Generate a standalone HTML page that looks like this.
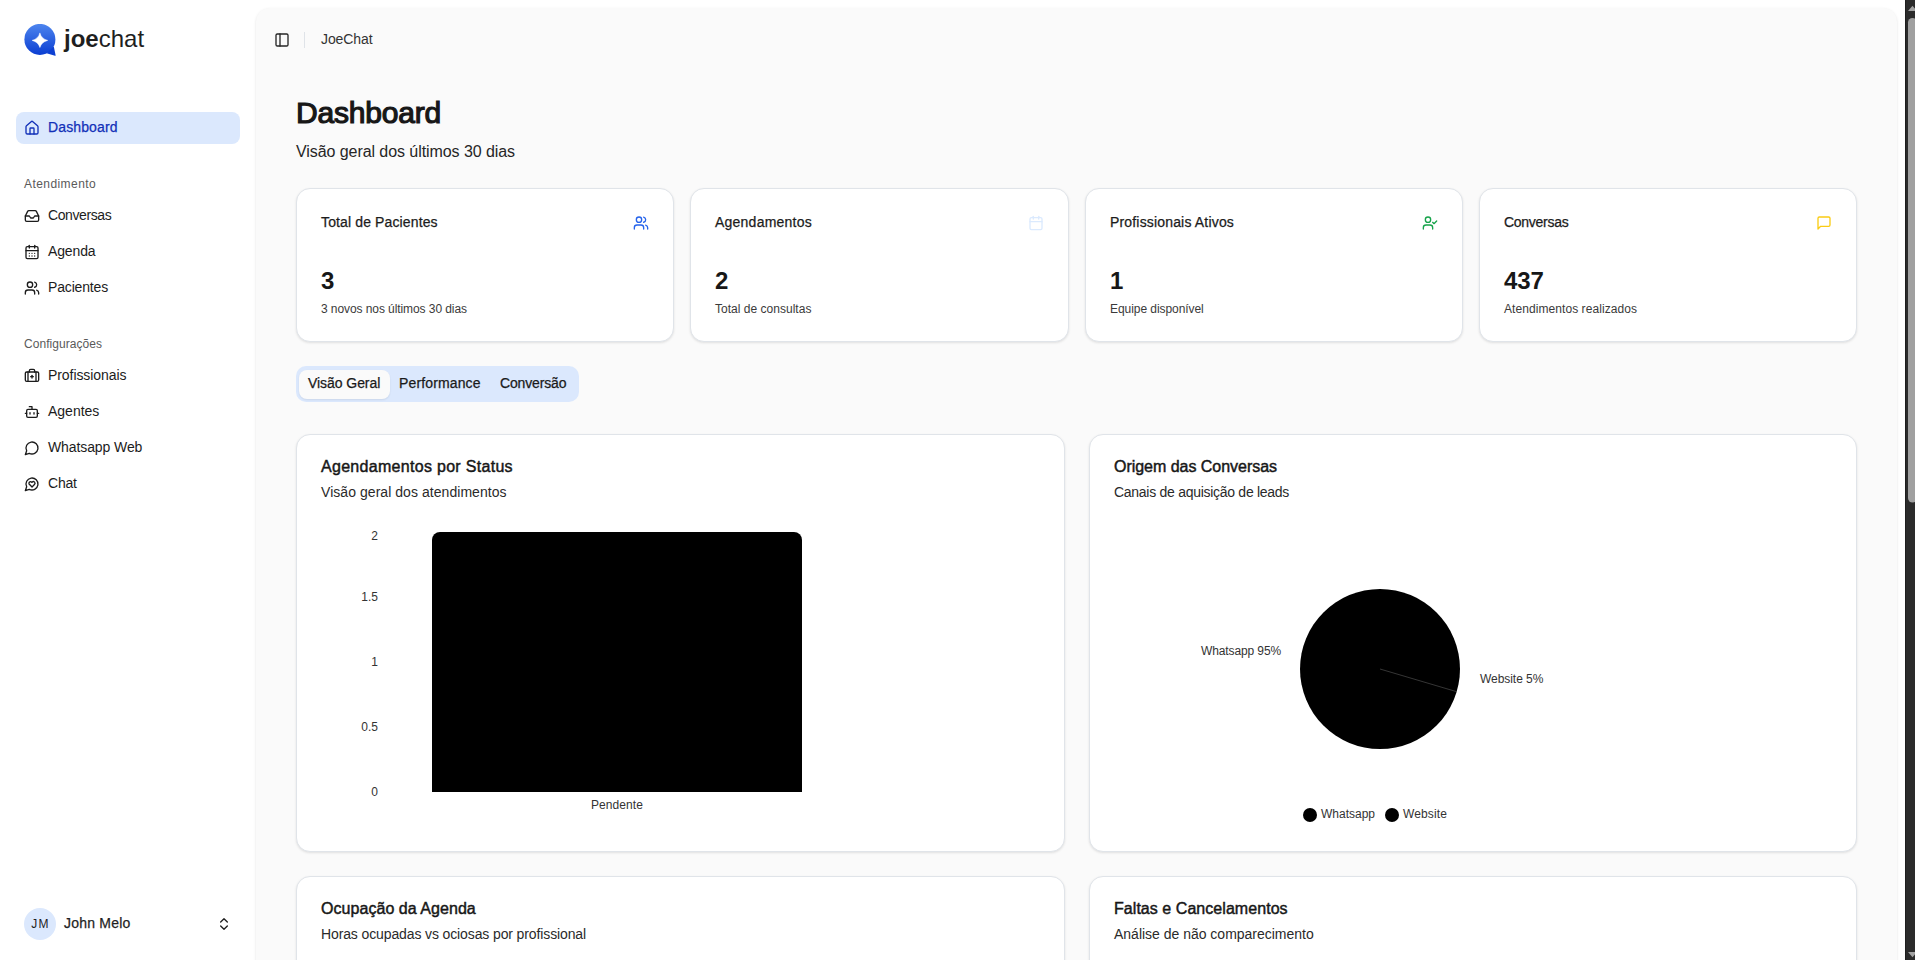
<!DOCTYPE html>
<html>
<head>
<meta charset="utf-8">
<title>JoeChat Dashboard</title>
<style>
*{box-sizing:border-box;margin:0;padding:0}
html,body{width:1915px;height:960px;overflow:hidden;background:#fff;font-family:"Liberation Sans",sans-serif;color:#171717}
.a{position:absolute;white-space:nowrap}
svg.i{position:absolute;fill:none;stroke:currentColor;stroke-width:2;stroke-linecap:round;stroke-linejoin:round}
#main{position:absolute;left:256px;top:8px;width:1641px;height:1000px;background:#fafafa;border-radius:14px;box-shadow:0 1px 3px 0 rgba(0,0,0,0.1),0 1px 2px -1px rgba(0,0,0,0.1)}
.card{position:absolute;background:#fff;border:1px solid #e0e4e9;border-radius:14px;box-shadow:0 1px 3px rgba(0,0,0,0.07),0 1px 2px rgba(0,0,0,0.04)}
</style>
</head>
<body>
<svg class="a" style="left:24px;top:24px;width:32px;height:32px" viewBox="0 0 32 32">
  <defs><linearGradient id="lg" x1="0" y1="0" x2="0" y2="1"><stop offset="0" stop-color="#4d85ee"/><stop offset="1" stop-color="#0b3ed2"/></linearGradient></defs>
  <circle cx="15.9" cy="15.4" r="15.5" fill="url(#lg)"/>
  <path d="M29.8 22.5 L31.6 31.2 Q31.8 31.9 31 31.7 L22.5 29.2 Z" fill="#0d40d3"/>
  <path d="M15.9 8.9 Q17.5 14.8 23.7 16.4 Q17.5 18 15.9 23.5 Q14.3 18 8.1 16.4 Q14.3 14.8 15.9 8.9 Z" fill="#fff" stroke="#fff" stroke-width="0.5" stroke-linejoin="round"/>
</svg>
<div class="a" style="left:64px;top:25px;font-size:24px;line-height:28px;color:#1f1f1f"><b>joe</b>chat</div>
<div class="a" style="left:16px;top:112px;width:224px;height:32px;background:#dbe8fd;border-radius:8px"></div>
<svg class="i" style="left:24px;top:120px;width:16px;height:16px;color:#1230b8" viewBox="0 0 24 24"><path d="M15 21v-8a1 1 0 0 0-1-1h-4a1 1 0 0 0-1 1v8"/><path d="M3 10a2 2 0 0 1 .709-1.528l7-5.999a2 2 0 0 1 2.582 0l7 5.999A2 2 0 0 1 21 10v9a2 2 0 0 1-2 2H5a2 2 0 0 1-2-2z"/></svg>
<div class="a" style="left:48px;top:117px;font-size:14px;line-height:20px;color:#1230b8;letter-spacing:0.12px;-webkit-text-stroke:0.25px currentColor">Dashboard</div>
<div class="a" style="left:24px;top:174px;font-size:12px;line-height:20px;color:#5a5a5a;letter-spacing:0.43px">Atendimento</div>
<svg class="i" style="left:24px;top:208px;width:16px;height:16px;color:#1c1c1c" viewBox="0 0 24 24"><polyline points="22 12 16 12 14 15 10 15 8 12 2 12"/><path d="M5.45 5.11 2 12v6a2 2 0 0 0 2 2h16a2 2 0 0 0 2-2v-6l-3.45-6.89A2 2 0 0 0 16.76 4H7.24a2 2 0 0 0-1.79 1.11z"/></svg>
<div class="a" style="left:48px;top:205px;font-size:14px;line-height:20px;color:#1c1c1c;letter-spacing:-0.41px">Conversas</div>
<svg class="i" style="left:24px;top:244px;width:16px;height:16px;color:#1c1c1c" viewBox="0 0 24 24"><path d="M8 2v4"/><path d="M16 2v4"/><rect width="18" height="18" x="3" y="4" rx="2"/><path d="M3 10h18"/><path d="M8 14h.01"/><path d="M12 14h.01"/><path d="M16 14h.01"/><path d="M8 18h.01"/><path d="M12 18h.01"/><path d="M16 18h.01"/></svg>
<div class="a" style="left:48px;top:241px;font-size:14px;line-height:20px;color:#1c1c1c;letter-spacing:-0.13px">Agenda</div>
<svg class="i" style="left:24px;top:280px;width:16px;height:16px;color:#1c1c1c" viewBox="0 0 24 24"><path d="M16 21v-2a4 4 0 0 0-4-4H6a4 4 0 0 0-4 4v2"/><circle cx="9" cy="7" r="4"/><path d="M22 21v-2a4 4 0 0 0-3-3.87"/><path d="M16 3.13a4 4 0 0 1 0 7.75"/></svg>
<div class="a" style="left:48px;top:277px;font-size:14px;line-height:20px;color:#1c1c1c;letter-spacing:-0.16px">Pacientes</div>
<div class="a" style="left:24px;top:334px;font-size:12px;line-height:20px;color:#5a5a5a;letter-spacing:0.05px">Configurações</div>
<svg class="i" style="left:24px;top:368px;width:16px;height:16px;color:#1c1c1c" viewBox="0 0 24 24"><path d="M12 11v4"/><path d="M14 13h-4"/><path d="M16 6V4a2 2 0 0 0-2-2h-4a2 2 0 0 0-2 2v2"/><path d="M18 6v14"/><path d="M6 6v14"/><rect width="20" height="14" x="2" y="6" rx="2"/></svg>
<div class="a" style="left:48px;top:365px;font-size:14px;line-height:20px;color:#1c1c1c;letter-spacing:-0.07px">Profissionais</div>
<svg class="i" style="left:24px;top:404px;width:16px;height:16px;color:#1c1c1c" viewBox="0 0 24 24"><path d="M12 8V4H8"/><rect width="16" height="12" x="4" y="8" rx="2"/><path d="M2 14h2"/><path d="M20 14h2"/><path d="M15 13v2"/><path d="M9 13v2"/></svg>
<div class="a" style="left:48px;top:401px;font-size:14px;line-height:20px;color:#1c1c1c">Agentes</div>
<svg class="i" style="left:24px;top:440px;width:16px;height:16px;color:#1c1c1c" viewBox="0 0 24 24"><path d="M7.9 20A9 9 0 1 0 4 16.1L2 22Z"/></svg>
<div class="a" style="left:48px;top:437px;font-size:14px;line-height:20px;color:#1c1c1c;letter-spacing:-0.1px">Whatsapp Web</div>
<svg class="i" style="left:24px;top:476px;width:16px;height:16px;color:#1c1c1c" viewBox="0 0 24 24"><path d="M7.9 20A9 9 0 1 0 4 16.1L2 22Z"/><path d="M15.8 9.2a2.5 2.5 0 0 0-3.5 0l-.3.4-.35-.3a2.42 2.42 0 1 0-3.2 3.6l3.6 3.5 3.6-3.5c1.2-1.2 1.1-2.7.2-3.7"/></svg>
<div class="a" style="left:48px;top:473px;font-size:14px;line-height:20px;color:#1c1c1c;letter-spacing:-0.22px">Chat</div>
<div class="a" style="left:24px;top:908px;width:32px;height:32px;border-radius:50%;background:#dbe8fd"></div>
<div class="a" style="left:24px;top:914px;font-size:12px;line-height:20px;color:#1f1f1f;letter-spacing:1.2px;width:33px;text-align:center">JM</div>
<div class="a" style="left:64px;top:913px;font-size:14px;line-height:20px;color:#1f1f1f;letter-spacing:0.21px;-webkit-text-stroke:0.25px currentColor">John Melo</div>
<svg class="i" style="left:216px;top:916px;width:16px;height:16px;color:#1f1f1f" viewBox="0 0 24 24"><path d="m7 15 5 5 5-5"/><path d="m7 9 5-5 5 5"/></svg>
<div id="main"></div>
<svg class="i" style="left:274px;top:32px;width:16px;height:16px;color:#262626" viewBox="0 0 24 24"><rect width="18" height="18" x="3" y="3" rx="2"/><path d="M9 3v18"/></svg>
<div class="a" style="left:304px;top:32px;width:1px;height:16px;background:#dfe3e8"></div>
<div class="a" style="left:321px;top:29px;font-size:14px;line-height:20px;color:#333;letter-spacing:-0.1px">JoeChat</div>
<div class="a" style="left:296px;top:95px;font-size:30px;line-height:36px;color:#171717;letter-spacing:-0.2px;-webkit-text-stroke:1.2px currentColor">Dashboard</div>
<div class="a" style="left:296px;top:141px;font-size:16px;line-height:22px;color:#262626;letter-spacing:-0.07px">Visão geral dos últimos 30 dias</div>
<div class="card" style="left:296px;top:188px;width:378px;height:154px"></div>
<div class="card" style="left:690px;top:188px;width:379px;height:154px"></div>
<div class="card" style="left:1085px;top:188px;width:378px;height:154px"></div>
<div class="card" style="left:1479px;top:188px;width:378px;height:154px"></div>
<div class="a" style="left:321px;top:212px;font-size:14px;line-height:20px;color:#1c1c1c;letter-spacing:0.13px;-webkit-text-stroke:0.25px currentColor">Total de Pacientes</div>
<div class="a" style="left:715px;top:212px;font-size:14px;line-height:20px;color:#1c1c1c;letter-spacing:0.23px;-webkit-text-stroke:0.25px currentColor">Agendamentos</div>
<div class="a" style="left:1110px;top:212px;font-size:14px;line-height:20px;color:#1c1c1c;letter-spacing:0.17px;-webkit-text-stroke:0.25px currentColor">Profissionais Ativos</div>
<div class="a" style="left:1504px;top:212px;font-size:14px;line-height:20px;color:#1c1c1c;letter-spacing:-0.28px;-webkit-text-stroke:0.25px currentColor">Conversas</div>
<svg class="i" style="left:633.25px;top:215px;width:16px;height:16px;color:#2563eb" viewBox="0 0 24 24"><path d="M16 21v-2a4 4 0 0 0-4-4H6a4 4 0 0 0-4 4v2"/><circle cx="9" cy="7" r="4"/><path d="M22 21v-2a4 4 0 0 0-3-3.87"/><path d="M16 3.13a4 4 0 0 1 0 7.75"/></svg>
<svg class="i" style="left:1027.5px;top:215px;width:16px;height:16px;color:#dbeafe" viewBox="0 0 24 24"><path d="M8 2v4"/><path d="M16 2v4"/><rect width="18" height="18" x="3" y="4" rx="2"/><path d="M3 10h18"/></svg>
<svg class="i" style="left:1421.75px;top:215px;width:16px;height:16px;color:#16a34a" viewBox="0 0 24 24"><path d="m16 11 2 2 4-4"/><path d="M16 21v-2a4 4 0 0 0-4-4H6a4 4 0 0 0-4 4v2"/><circle cx="9" cy="7" r="4"/></svg>
<svg class="i" style="left:1816px;top:215px;width:16px;height:16px;color:#facc15" viewBox="0 0 24 24"><path d="M21 15a2 2 0 0 1-2 2H7l-4 4V5a2 2 0 0 1 2-2h14a2 2 0 0 1 2 2z"/></svg>
<div class="a" style="left:321px;top:265px;font-size:24px;line-height:32px;color:#171717;letter-spacing:-0.1px;font-weight:700">3</div>
<div class="a" style="left:715px;top:265px;font-size:24px;line-height:32px;color:#171717;letter-spacing:-0.1px;font-weight:700">2</div>
<div class="a" style="left:1110px;top:265px;font-size:24px;line-height:32px;color:#171717;letter-spacing:-0.1px;font-weight:700">1</div>
<div class="a" style="left:1504px;top:265px;font-size:24px;line-height:32px;color:#171717;letter-spacing:-0.1px;font-weight:700">437</div>
<div class="a" style="left:321px;top:301px;font-size:12px;line-height:16px;color:#3a3a3a;letter-spacing:-0.08px">3 novos nos últimos 30 dias</div>
<div class="a" style="left:715px;top:301px;font-size:12px;line-height:16px;color:#3a3a3a;letter-spacing:0.02px">Total de consultas</div>
<div class="a" style="left:1110px;top:301px;font-size:12px;line-height:16px;color:#3a3a3a;letter-spacing:-0.06px">Equipe disponível</div>
<div class="a" style="left:1504px;top:301px;font-size:12px;line-height:16px;color:#3a3a3a;letter-spacing:0.07px">Atendimentos realizados</div>
<div class="a" style="left:296px;top:366px;width:283px;height:36px;background:#dbe8fd;border-radius:10px"></div>
<div class="a" style="left:299px;top:370px;width:91px;height:29px;background:#fafafa;border-radius:8px;box-shadow:0 1px 2px rgba(0,0,0,0.08)"></div>
<div class="a" style="left:308px;top:373px;font-size:14px;line-height:20px;color:#1a1a1a;letter-spacing:-0.06px;-webkit-text-stroke:0.25px currentColor">Visão Geral</div>
<div class="a" style="left:399px;top:373px;font-size:14px;line-height:20px;color:#1a1a1a;letter-spacing:0.14px;-webkit-text-stroke:0.25px currentColor">Performance</div>
<div class="a" style="left:500px;top:373px;font-size:14px;line-height:20px;color:#1a1a1a;letter-spacing:-0.16px;-webkit-text-stroke:0.25px currentColor">Conversão</div>
<div class="card" style="left:296px;top:434px;width:769px;height:418px"></div>
<div class="card" style="left:1089px;top:434px;width:768px;height:418px"></div>
<div class="card" style="left:296px;top:876px;width:769px;height:200px"></div>
<div class="card" style="left:1089px;top:876px;width:768px;height:200px"></div>
<div class="a" style="left:321px;top:456px;font-size:16px;line-height:22px;color:#171717;letter-spacing:0.3px;-webkit-text-stroke:0.45px currentColor">Agendamentos por Status</div>
<div class="a" style="left:321px;top:482px;font-size:14px;line-height:20px;color:#2a2a2a;letter-spacing:0.05px">Visão geral dos atendimentos</div>
<div class="a" style="left:1114px;top:456px;font-size:16px;line-height:22px;color:#171717;letter-spacing:-0.03px;-webkit-text-stroke:0.45px currentColor">Origem das Conversas</div>
<div class="a" style="left:1114px;top:482px;font-size:14px;line-height:20px;color:#2a2a2a;letter-spacing:-0.28px">Canais de aquisição de leads</div>
<div class="a" style="left:321px;top:898px;font-size:16px;line-height:22px;color:#171717;letter-spacing:0.05px;-webkit-text-stroke:0.45px currentColor">Ocupação da Agenda</div>
<div class="a" style="left:321px;top:924px;font-size:14px;line-height:20px;color:#2a2a2a;letter-spacing:-0.12px">Horas ocupadas vs ociosas por profissional</div>
<div class="a" style="left:1114px;top:898px;font-size:16px;line-height:22px;color:#171717;letter-spacing:0.05px;-webkit-text-stroke:0.45px currentColor">Faltas e Cancelamentos</div>
<div class="a" style="left:1114px;top:924px;font-size:14px;line-height:20px;color:#2a2a2a;letter-spacing:-0.01px">Análise de não comparecimento</div>
<div class="a" style="left:432px;top:532px;width:370px;height:260px;background:#000;border-radius:8px 8px 0 0"></div>
<div class="a" style="left:330px;top:528px;font-size:12px;line-height:16px;color:#333;width:48px;text-align:right">2</div>
<div class="a" style="left:330px;top:589px;font-size:12px;line-height:16px;color:#333;width:48px;text-align:right">1.5</div>
<div class="a" style="left:330px;top:654px;font-size:12px;line-height:16px;color:#333;width:48px;text-align:right">1</div>
<div class="a" style="left:330px;top:719px;font-size:12px;line-height:16px;color:#333;width:48px;text-align:right">0.5</div>
<div class="a" style="left:330px;top:784px;font-size:12px;line-height:16px;color:#333;width:48px;text-align:right">0</div>
<div class="a" style="left:567px;top:797px;font-size:12px;line-height:16px;color:#333;letter-spacing:0.08px;width:100px;text-align:center">Pendente</div>
<svg class="a" style="left:1290px;top:579px;width:180px;height:180px" viewBox="0 0 180 180">
  <circle cx="90" cy="90" r="80" fill="#000"/>
  <line x1="90" y1="90" x2="166.7" y2="112.7" stroke="#777" stroke-width="0.45"/>
</svg>
<div class="a" style="left:1181px;top:643px;font-size:12px;line-height:16px;color:#333;letter-spacing:-0.12px;width:100px;text-align:right">Whatsapp 95%</div>
<div class="a" style="left:1480px;top:671px;font-size:12px;line-height:16px;color:#333;letter-spacing:-0.05px">Website 5%</div>
<div class="a" style="left:1303px;top:808px;width:14px;height:14px;border-radius:50%;background:#000"></div>
<div class="a" style="left:1321px;top:806px;font-size:12px;line-height:16px;color:#333">Whatsapp</div>
<div class="a" style="left:1385px;top:808px;width:14px;height:14px;border-radius:50%;background:#000"></div>
<div class="a" style="left:1403px;top:806px;font-size:12px;line-height:16px;color:#333;letter-spacing:0.12px">Website</div>
<div class="a" style="left:1905px;top:0;width:15px;height:960px;background:#2b2b2b"></div>
<div class="a" style="left:1905px;top:0;width:1px;height:960px;background:#1e1e1e"></div>
<svg class="a" style="left:1905px;top:0;width:15px;height:960px" viewBox="0 0 15 960">
  <path d="M3 11 L7.5 5.8 L12 11 Z" fill="#a3a3a3"/>
  <path d="M3 952 L7.5 957.2 L12 952 Z" fill="#a3a3a3"/>
  <rect x="3" y="18" width="9" height="484.5" rx="4.5" fill="#a0a0a0"/>
</svg>
</body>
</html>
